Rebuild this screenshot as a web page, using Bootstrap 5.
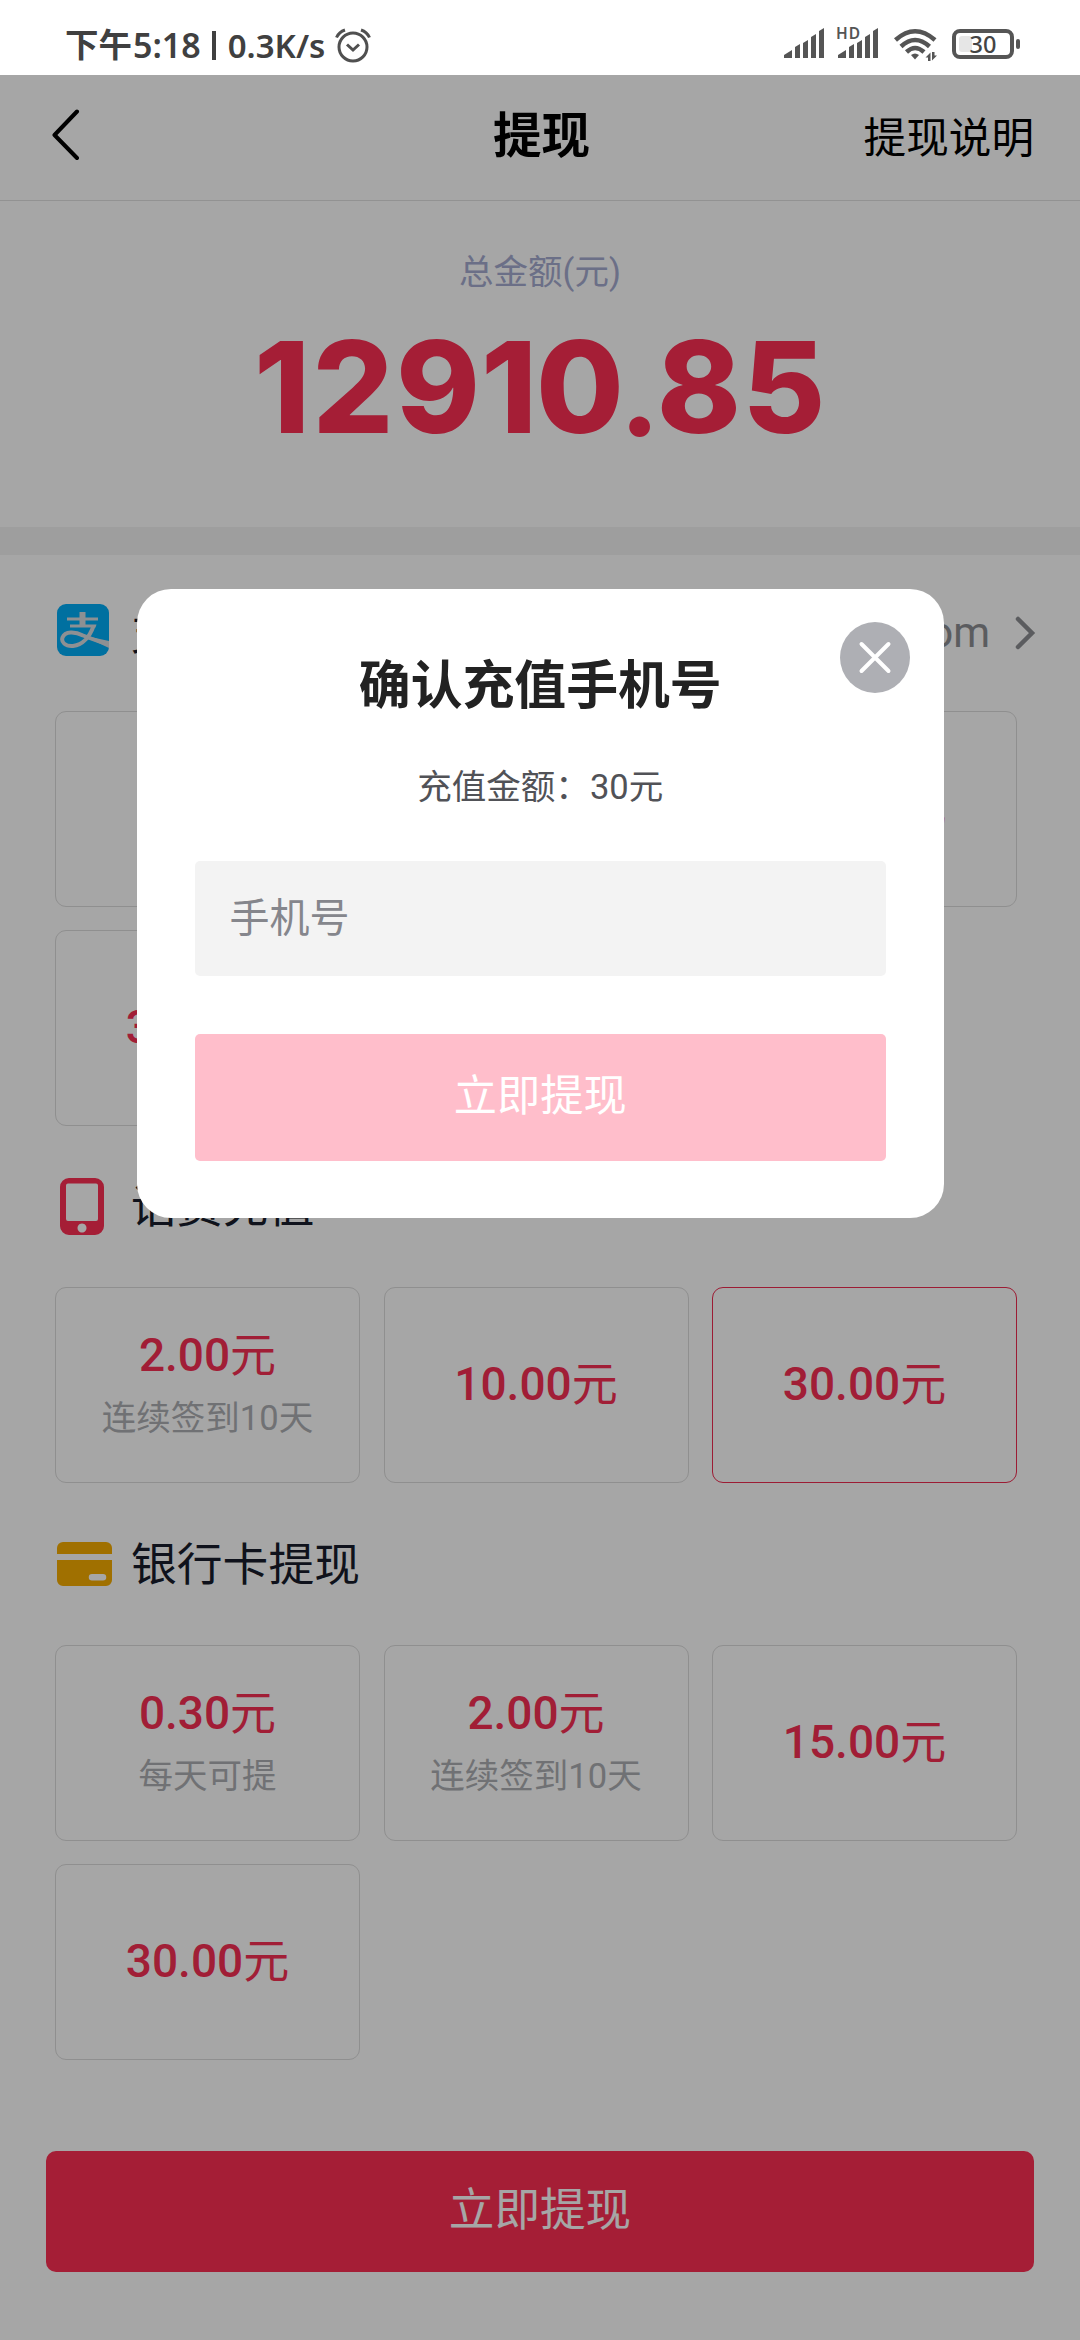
<!DOCTYPE html>
<html lang="zh-CN">
<head>
<meta charset="utf-8">
<meta name="viewport" content="width=device-width, initial-scale=1">
<title>提现</title>
<link href="https://cdn.jsdelivr.net/npm/bootstrap@5.3.0/dist/css/bootstrap.min.css" rel="stylesheet">
<style>
html,body{height:2340px;overflow:hidden}
body{font-family:Roboto,"Noto Sans CJK SC",sans-serif;font-size:46px;line-height:1;color:#181d2b;background:#fff}
svg{display:block;flex:none}
.status{height:75px;padding:14px 59px 0 65px;color:#404040;font-family:"Noto Sans","Noto Sans CJK SC",sans-serif;font-weight:600;font-size:34px}
.status .cjk{font-size:33.5px;font-weight:700;margin-right:1px}
.status .speed{font-size:33px;margin:0 10px 0 12px}
.status .bar{width:4px;height:29px;background:#404040;margin-left:11px}
.status .icons{margin-top:1px}
.page{height:2265px}
.topbar{height:126px;padding:0 46px 0 52px;border-bottom:1px solid #e0e0e0;color:#000}
.topbar .side{width:200px}
.topbar h1{font-size:48.5px;font-weight:700;line-height:1;padding-bottom:1px;padding-right:3px}
.topbar .help{font-size:42.6px;white-space:nowrap;margin-bottom:-1px}
.topbar svg{margin-bottom:6px}
.total{height:326px;padding-top:53px}
.total .cap{font-size:34.5px;color:#a5abd0;line-height:36px}
.amount{font-family:Inter,sans-serif;font-weight:800;font-size:127px;line-height:128px;color:#fe2e53;margin-top:33px}
.amount span{display:flex;justify-content:center}
.w1{width:57px}.w2{width:85px}.wd{width:34px;font-family:Lato,sans-serif;font-weight:900}
.band{height:28px;background:#f3f3f3}
.sect{height:156px;padding:0 43px 0 57px}
.sect.phone{height:161px}
.sect.bank{height:162px}
.sect h2{font-size:45.8px;font-weight:400;line-height:1;padding-top:3px}
.ic{width:74px}
.up{margin-bottom:6px}
.account{font-size:42px;color:#8d8e92;margin-right:25px}
.tiles{display:grid;grid-template-columns:repeat(3,305px);column-gap:23.5px;row-gap:23px;padding-left:55px}
.tile{height:196px;border:1px solid #dcdcdc;border-radius:11px;color:#f72e53;padding-bottom:3px}
.tile.on{border-color:#f02b50}
.tile b{font-weight:500;font-size:46px;line-height:50px}
.tile i{font-style:normal;font-weight:400}
.tile small{font-size:34.5px;color:#acaeb2;line-height:40px;margin-top:18px}
.pay{height:121px;margin:91px 46px 0;border-radius:10px;background:#fe2e53;color:#fff;border:0;font-size:45.6px;width:988px;padding:0 0 2px}
.mask{top:75px;left:0;width:1080px;height:2265px;background:rgba(0,0,0,.35)}
.dialog{left:137px;top:588.5px;width:806.5px;height:629.5px;border-radius:34px;background:#fff;padding:0 57.5px;color:#222}
.dialog h3{font-size:51.84px;font-weight:700;line-height:60px;margin:68px 0 0}
.dialog p{font-size:34.56px;line-height:40px;color:#515257;margin:50px 0 0}
.dialog .form-control{height:115px;border:0;border-radius:5px;background:#f3f3f3;padding:0 36px 1px 35px;font-size:40px;margin-top:54.5px}
.dialog .form-control::placeholder{color:#85868c;opacity:1}
.dialog .go{height:127px;border:0;border-radius:5px;background:#ffbecb;color:#fff;font-size:43.2px;margin-top:58px;padding:0 0 1px}
.shut{right:33.5px;top:33.5px}
</style>
</head>
<body>
<div class="status d-flex justify-content-between align-items-start">
  <div class="d-flex align-items-center" style="height:62px">
    <span class="cjk">下午</span><span>5:18</span><span class="bar"></span><span class="speed">0.3K/s</span>
    <svg width="36" height="36" viewBox="0 0 36 36" fill="none" stroke="#505050" stroke-width="3"><circle cx="18" cy="20" r="14"/><path d="M12 17.500l6 5.500 6-5.500M1.500 10.500Q4 5 10 3M34.500 10.500Q32 5 26 3"/></svg>
  </div>
  <svg class="icons" width="238" height="55" viewBox="783 15 238 55" fill="#555">
    <path d="M784 58v-3l8-5v8zM795 58V47l5-3v14zM803 58V43l5-3v18zM811 58V37l5-3v24zM819 58V31l5-3v30z"/>
    <path d="M838 58v-3l8-5v8zM849 58V47l5-3v14zM857 58V43l5-3v18zM865 58V37l5-3v24zM873 58V31l5-3v30z"/>
    <text x="836" y="39" font-family="Noto Sans" font-weight="600" font-size="15.500" textLength="24">HD</text>
    <g fill="none" stroke="#555" stroke-width="4.500"><path d="M895.500 40Q915 22.500 935 40M901 46.500Q915 33.500 929.500 46.500M906.500 52Q915 44 924 52"/></g>
    <path d="M911 55q4-3 8 0l-4 4.500z"/>
    <path d="M925.500 57.500l5-5V61h-2.500v-3.500zM932 52h2.500v3.500h2.500l-5 5z"/>
    <rect x="954" y="31" width="58" height="26" rx="6" fill="#fff" stroke="#555" stroke-width="4"/>
    <rect x="959" y="36" width="13" height="16" rx="3" fill="#e6e6e6"/>
    <rect x="1016" y="39" width="4" height="10" rx="2"/>
    <text x="983" y="52.500" text-anchor="middle" font-family="Noto Sans" font-weight="500" font-size="23.500" fill="#444">30</text>
  </svg>
</div>
<main class="page d-flex flex-column">
  <header class="topbar d-flex align-items-center justify-content-between">
    <div class="side"><svg width="28" height="52" viewBox="0 0 28 52"><path d="M25 2.500 2.500 26 25 49" fill="none" stroke="#000" stroke-width="4" stroke-linecap="round" stroke-linejoin="round"/></svg></div>
    <h1 class="mb-0">提现</h1>
    <div class="side d-flex justify-content-end"><span class="help">提现说明</span></div>
  </header>
  <section class="total text-center">
    <div class="cap">总金额(元)</div>
    <div class="amount d-flex justify-content-center"><span class="w1">1</span><span class="w2">2</span><span class="w2">9</span><span class="w1">1</span><span class="w2">0</span><span class="wd">.</span><span class="w2">8</span><span class="w2">5</span></div>
  </section>
  <div class="band"></div>
  <div class="sect d-flex align-items-center">
    <div class="ic up"><svg width="52" height="52" viewBox="0 0 52 52"><rect width="52" height="52" rx="9" fill="#00acf6"/><path d="M10 13.500h31v3H10zM13 20.500h26.500l-1 3H13zM22.500 8h6v14h-6z" fill="#d9dde2"/><path d="M36.500 22C33 32 26 41 16 42 8 42.500 4 38 5.500 33.500 8 27 18 27.500 26 31.500 35 35 43 38 52 40.500" fill="none" stroke="#d9dde2" stroke-width="4"/><path d="M36 33.500 52 37v7L33 35z" fill="#d9dde2"/></svg></div>
    <h2 class="m-0 flex-grow-1">支付宝提现</h2>
    <span class="account">qq.com</span>
    <svg width="22" height="34" viewBox="0 0 22 34"><path d="M3 3 17 17 3 31" fill="none" stroke="#8d8e92" stroke-width="4.500" stroke-linecap="round"/></svg>
  </div>
  <div class="tiles">
    <div class="tile"></div>
    <div class="tile"></div>
    <div class="tile d-flex flex-column align-items-center justify-content-center"><b>15.00<i>元</i></b></div>
    <div class="tile d-flex flex-column align-items-center justify-content-center"><b>30.00<i>元</i></b></div>
  </div>
  <div class="sect phone d-flex align-items-center">
    <div class="ic"><svg width="52" height="57" viewBox="0 0 52 57"><path fill-rule="evenodd" d="M12 0h26a9 9 0 0 1 9 9v39a9 9 0 0 1-9 9H12a9 9 0 0 1-9-9V9a9 9 0 0 1 9-9zM11 5.500q-2 0-2 2V41q0 2 2 2h28q2 0 2-2V7.500q0-2-2-2zM25 45.500a4.500 4.500 0 1 0 .01 0z" fill="#fe2e53"/></svg></div>
    <h2 class="m-0">话费充值</h2>
  </div>
  <div class="tiles">
    <div class="tile d-flex flex-column align-items-center justify-content-center"><b>2.00<i>元</i></b><small>连续签到10天</small></div>
    <div class="tile d-flex flex-column align-items-center justify-content-center"><b>10.00<i>元</i></b></div>
    <div class="tile on d-flex flex-column align-items-center justify-content-center"><b>30.00<i>元</i></b></div>
  </div>
  <div class="sect bank d-flex align-items-center">
    <div class="ic"><svg width="55" height="44" viewBox="0 0 55 44"><path fill="#f6ac00" d="M6 0h43a6 6 0 0 1 6 6v6H0V6a6 6 0 0 1 6-6z"/><path fill="#f6ac00" fill-rule="evenodd" d="M0 18h55v20a6 6 0 0 1-6 6H6a6 6 0 0 1-6-6zM35 32a3 3 0 0 0 0 6.500h11a3 3 0 0 0 0-6.500z"/></svg></div>
    <h2 class="m-0">银行卡提现</h2>
  </div>
  <div class="tiles">
    <div class="tile d-flex flex-column align-items-center justify-content-center"><b>0.30<i>元</i></b><small>每天可提</small></div>
    <div class="tile d-flex flex-column align-items-center justify-content-center"><b>2.00<i>元</i></b><small>连续签到10天</small></div>
    <div class="tile d-flex flex-column align-items-center justify-content-center"><b>15.00<i>元</i></b></div>
    <div class="tile d-flex flex-column align-items-center justify-content-center"><b>30.00<i>元</i></b></div>
  </div>
  <button class="pay">立即提现</button>
</main>
<div class="mask position-absolute"></div>
<div class="dialog position-absolute text-center">
  <svg class="shut position-absolute" width="70" height="71" viewBox="0 0 70 71"><ellipse cx="35" cy="35.500" rx="35" ry="35.500" fill="#aeafb4"/><path d="M21.500 22 48.500 49M48.500 22 21.500 49" stroke="#fff" stroke-width="4" stroke-linecap="round"/></svg>
  <h3>确认充值手机号</h3>
  <p>充值金额：30元</p>
  <input class="form-control" placeholder="手机号">
  <button class="go btn w-100 d-block">立即提现</button>
</div>
<script src="https://cdn.jsdelivr.net/npm/bootstrap@5.3.0/dist/js/bootstrap.bundle.min.js"></script>
</body>
</html>
